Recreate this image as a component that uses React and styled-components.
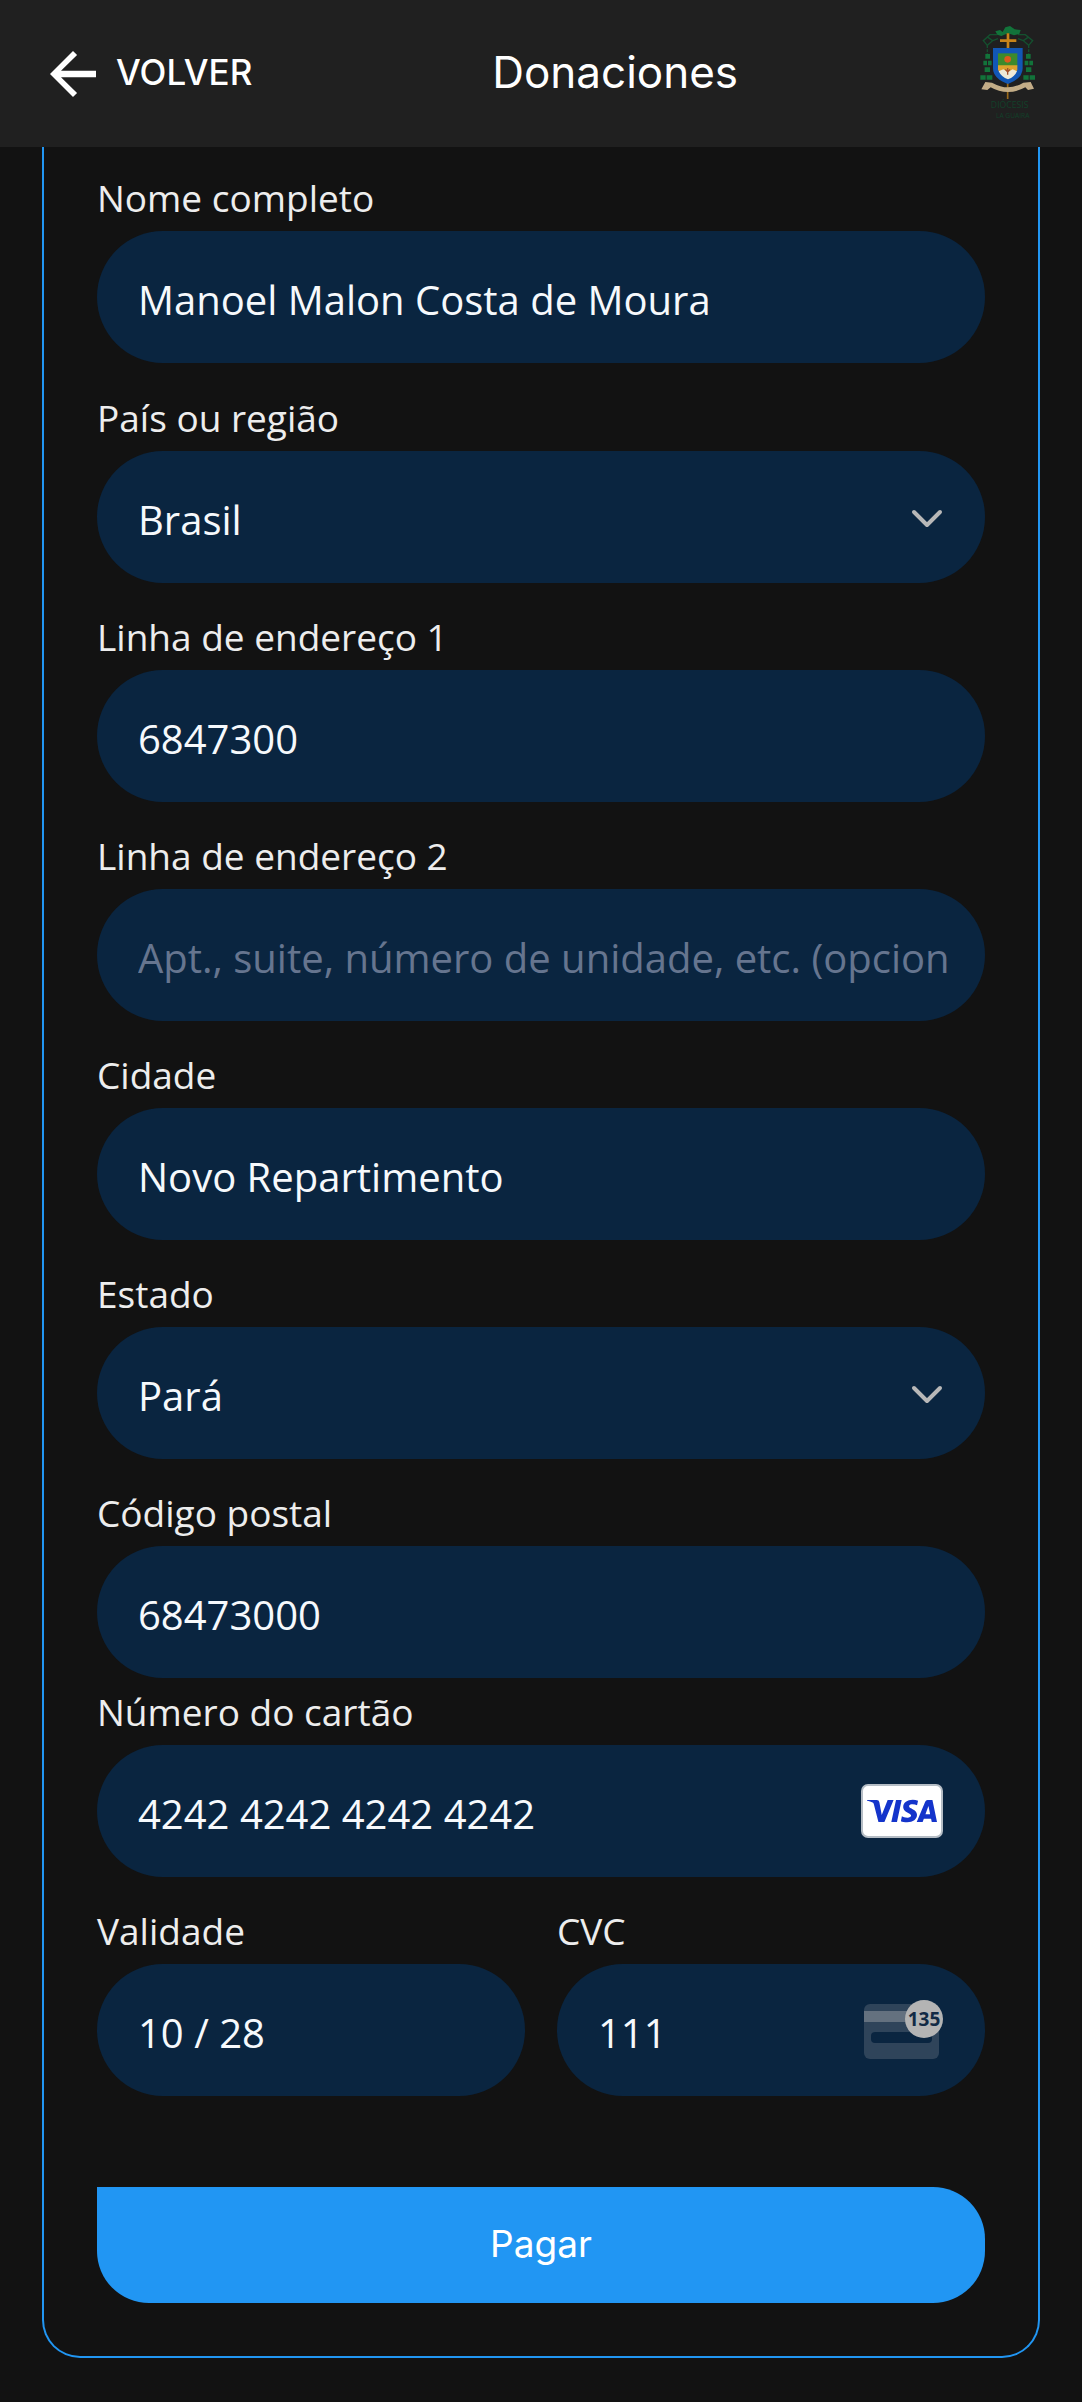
import React from "react";
import styled, { createGlobalStyle } from "styled-components";
import { SiVisa } from "react-icons/si";

const formFont = '"Open Sans", "Noto Sans", sans-serif';
const brandFont = 'Inter, "Open Sans", sans-serif';

const GlobalStyle = createGlobalStyle`
  *, *::before, *::after { box-sizing: border-box; }
  body { margin: 0; background: #121212; color: #fff; font-family: ${formFont}; }
`;

const Header = styled.header`
  display: flex;
  align-items: center;
  justify-content: space-between;
  height: 147px;
  padding: 0 44px 0 50px;
  background: #202020;
  font-family: ${brandFont};
`;

const BackLink = styled.a`
  display: flex;
  align-items: center;
  gap: 20px;
  color: #fff;
  font-size: 35px;
  line-height: 48px;
  font-weight: 500;
  text-decoration: none;

  svg { display: block; }
  span { padding-bottom: 4px; }
`;

const Title = styled.h1`
  margin: 0;
  padding-bottom: 4px;
  font-size: 44px;
  line-height: 60px;
  font-weight: 400;
`;

const Card = styled.form`
  margin: 0 42px 44px;
  padding: 25px 53px 53px;
  border: 2px solid #2196f3;
  border-top: 0;
  border-radius: 0 0 38px 38px;
`;

const Section = styled.section`
  display: flex;
  flex-direction: column;
  gap: 28px;
  margin-top: ${(p) => p.$spacing || 0}px;
`;

const Columns = styled.div`
  display: grid;
  grid-template-columns: 1fr 1fr;
  gap: 32px;
`;

const FieldBox = styled.div`
  display: flex;
  flex-direction: column;
  gap: 7px;
  min-width: 0;
`;

const Label = styled.label`
  color: #ededed;
  font-size: 37px;
  line-height: 52px;
`;

const Control = styled.div`
  display: flex;
  align-items: center;
  height: 132px;
  padding-right: 32px;
  border-radius: 66px;
  background: #0a2540;

  > svg, > span { flex: none; margin-right: 10px; pointer-events: none; }
`;

const Input = styled.input`
  flex: 1;
  min-width: 0;
  height: 100%;
  padding: 4px 0 0 41px;
  border: 0;
  outline: 0;
  background: transparent;
  color: #f6f9fc;
  font-family: inherit;
  font-size: 40px;
  font-weight: 500;

  &::placeholder { color: #66758f; font-weight: 400; opacity: 1; }
`;

const Select = styled(Input)`
  appearance: none;
`;

const ChevronIcon = styled.svg`
  margin-top: 4px;
`;

const CardBadge = styled.span`
  display: flex;
  align-items: center;
  justify-content: center;
  width: 82px;
  height: 54px;
  border: 2px solid #b5bdc5;
  border-radius: 7px;
  background: #fff;
  color: #1434cb;
`;

const PayButton = styled.button`
  width: 100%;
  height: 116px;
  margin-top: 91px;
  padding: 0 0 4px;
  border: 0;
  border-radius: 0 52px 52px 52px;
  background: #2196f3;
  color: #fff;
  font-family: ${brandFont};
  font-size: 37px;
  font-weight: 400;
`;

function ArrowBack() {
  return (
    <svg width="46" height="46" viewBox="4 4 16 16" fill="currentColor" aria-hidden="true">
      <path d="M20 10.9H7.83l5.59-5.49L12 4l-8 8 8 8 1.41-1.41L7.83 13.1H20z" />
    </svg>
  );
}

function Chevron() {
  return (
    <ChevronIcon width="32" height="20" viewBox="0 0 32 20" fill="none" aria-hidden="true">
      <path d="M3 3l13 13L29 3" stroke="#b8b8b8" strokeWidth="4" strokeLinecap="round" strokeLinejoin="round" />
    </ChevronIcon>
  );
}

function CvcIcon() {
  return (
    <svg width="80" height="60" viewBox="0 0 80 60" aria-hidden="true">
      <rect x="1" y="4" width="75" height="55" rx="6" fill="#2f445a" />
      <rect x="1" y="11" width="75" height="11" fill="#64717f" />
      <rect x="8" y="32" width="61" height="11" rx="4" fill="#0a2540" />
      <circle cx="61" cy="19" r="19" fill="#b4b4b4" />
      <text x="61" y="26" textAnchor="middle" fontFamily="Open Sans, sans-serif" fontSize="19" fontWeight="700" fill="#122a45">135</text>
    </svg>
  );
}

function Crest() {
  return (
    <svg width="60" height="100" viewBox="54 40 180 300" role="img" aria-label="Diócesis">
      <g fill="none" stroke="#14512f" strokeWidth="4">
        <path d="M112 72L90 72L70 90L82 104L98 90L84 80M98 90L114 84" />
        <path d="M174 72L196 72L218 90L206 104L190 90L204 80M190 90L174 84" />
        <path d="M82 104V130M206 104V130" strokeDasharray="8 4" />
      </g>
      <g fill="#12733a">
        <path d="M106 62L120 58L128 64L136 50L150 46L164 56L182 58L178 70L162 74L144 68L124 76L112 72Z" />
        <path d="M76 130h14v14h-14zM70 150h11v14H70zM84 150h11v14H84zM74 170h16v14H74zM61 194h16v13H61zM80 194h17v13H80z" />
        <path d="M198 130h14v14h-14zM194 150h11v14h-11zM208 150h11v14h-11zM198 170h16v14h-16zM190 194h16v13h-16zM209 194h16v13h-16z" />
      </g>
      <path d="M144 68V112M120 90H169" stroke="#c9841a" strokeWidth="8" />
      <path d="M143 216V265" stroke="#9a6a1a" strokeWidth="5" />
      <path d="M99 112H188V172Q188 204 144 220Q99 204 99 172Z" fill="#1257b5" />
      <path d="M114 128H172V168H114Z" fill="#3d8a2c" />
      <path d="M114 164H172V178Q166 190 144 190Q120 190 114 178Z" fill="#dea32e" />
      <path d="M116 182L130 176L144 184L158 176L171 182Q164 199 144 206Q124 199 116 182Z" fill="#f0ead8" />
      <circle cx="143" cy="146" r="10" fill="#dd5a1c" />
      <path d="M136 176L143 184L150 176M143 172V192" stroke="#a3502d" strokeWidth="4" fill="none" />
      <path d="M64 236L76 214L96 216Q122 230 144 230Q166 230 190 216L212 214L222 234L204 238L196 230Q170 244 144 244Q116 244 92 230L82 238Z" fill="#c3ad87" />
      <g fill="#12402a" fontFamily="Open Sans, sans-serif" fontSize="26" textAnchor="middle">
        <text x="149" y="293">DIÓCESIS</text>
        <text x="158" y="322" fontSize="20">LA GUAIRA</text>
      </g>
    </svg>
  );
}

function TextField({ id, label, adornment, ...rest }) {
  return (
    <FieldBox>
      <Label htmlFor={id}>{label}</Label>
      <Control>
        <Input id={id} type="text" {...rest} />
        {adornment}
      </Control>
    </FieldBox>
  );
}

function SelectField({ id, label, option }) {
  return (
    <FieldBox>
      <Label htmlFor={id}>{label}</Label>
      <Control>
        <Select as="select" id={id}>
          <option>{option}</option>
        </Select>
        <Chevron />
      </Control>
    </FieldBox>
  );
}

export default function App() {
  return (
    <>
      <GlobalStyle />
      <Header>
        <BackLink href="#volver">
          <ArrowBack />
          <span>VOLVER</span>
        </BackLink>
        <Title>Donaciones</Title>
        <Crest />
      </Header>
      <main>
        <Card onSubmit={(e) => e.preventDefault()}>
          <Section>
            <TextField id="nome" label="Nome completo" defaultValue="Manoel Malon Costa de Moura" />
          </Section>
          <Section $spacing={29}>
            <SelectField id="pais" label="País ou região" option="Brasil" />
            <TextField id="endereco1" label="Linha de endereço 1" defaultValue="6847300" />
            <TextField id="endereco2" label="Linha de endereço 2" placeholder="Apt., suite, número de unidade, etc. (opcion" />
            <TextField id="cidade" label="Cidade" defaultValue="Novo Repartimento" />
            <SelectField id="estado" label="Estado" option="Pará" />
            <TextField id="postal" label="Código postal" defaultValue="68473000" />
          </Section>
          <Section $spacing={8}>
            <TextField
              id="cartao"
              label="Número do cartão"
              defaultValue="4242 4242 4242 4242"
              adornment={<CardBadge><SiVisa size={70} title="Visa" /></CardBadge>}
            />
            <Columns>
              <TextField id="validade" label="Validade" defaultValue="10 / 28" />
              <TextField id="cvc" label="CVC" defaultValue="111" adornment={<CvcIcon />} />
            </Columns>
          </Section>
          <PayButton type="submit">Pagar</PayButton>
        </Card>
      </main>
    </>
  );
}
